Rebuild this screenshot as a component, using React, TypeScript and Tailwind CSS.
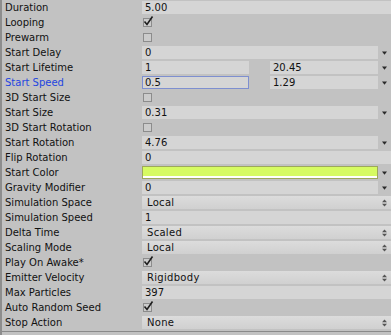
import React from "react";

type Row =
  | { label: string; kind: "field"; value: string; arrow?: boolean; active?: boolean }
  | { label: string; kind: "pair"; a: string; b: string; active?: boolean }
  | { label: string; kind: "check"; checked: boolean }
  | { label: string; kind: "popup"; value: string }
  | { label: string; kind: "color" };

const rows: Row[] = [
  { label: "Duration", kind: "field", value: "5.00" },
  { label: "Looping", kind: "check", checked: true },
  { label: "Prewarm", kind: "check", checked: false },
  { label: "Start Delay", kind: "field", value: "0", arrow: true },
  { label: "Start Lifetime", kind: "pair", a: "1", b: "20.45" },
  { label: "Start Speed", kind: "pair", a: "0.5", b: "1.29", active: true },
  { label: "3D Start Size", kind: "check", checked: false },
  { label: "Start Size", kind: "field", value: "0.31", arrow: true },
  { label: "3D Start Rotation", kind: "check", checked: false },
  { label: "Start Rotation", kind: "field", value: "4.76", arrow: true },
  { label: "Flip Rotation", kind: "field", value: "0" },
  { label: "Start Color", kind: "color" },
  { label: "Gravity Modifier", kind: "field", value: "0", arrow: true },
  { label: "Simulation Space", kind: "popup", value: "Local" },
  { label: "Simulation Speed", kind: "field", value: "1" },
  { label: "Delta Time", kind: "popup", value: "Scaled" },
  { label: "Scaling Mode", kind: "popup", value: "Local" },
  { label: "Play On Awake*", kind: "check", checked: true },
  { label: "Emitter Velocity", kind: "popup", value: "Rigidbody" },
  { label: "Max Particles", kind: "field", value: "397" },
  { label: "Auto Random Seed", kind: "check", checked: true },
  { label: "Stop Action", kind: "popup", value: "None" },
];

const Arrow = () => (
  <div className="w-[13px] flex items-center justify-center">
    <svg width="5" height="4" viewBox="0 0 5 4">
      <path d="M0 0.5h5L2.5 3.8z" fill="#2a2a2a" />
    </svg>
  </div>
);

const PopArrows = () => (
  <svg width="5" height="8" viewBox="0 0 5 8" className="absolute right-[4px] top-[3px]">
    <path d="M0 3.2h5L2.5 0.5z" fill="#555" />
    <path d="M0 4.8h5L2.5 7.5z" fill="#555" />
  </svg>
);

const Field = ({ value, active, className = "" }: { value: string; active?: boolean; className?: string }) => (
  <div
    className={`h-[13px] bg-[#d5d5d5] flex items-center pl-[3px] ${
      active ? "outline outline-1 outline-[#7e8fd0] -outline-offset-1" : ""
    } ${className}`}
  >
    {value}
  </div>
);

const Check = ({ checked }: { checked: boolean }) => (
  <div className="relative w-[9px] h-[9px] ml-[1px] border border-[#8c8c8c] bg-[#cbcbcb]">
    {checked && (
      <svg width="11" height="11" viewBox="0 0 11 11" className="absolute left-[-1px] top-[-4px]">
        <path d="M1.5 6.5 L4 9.5 L9.5 1.5" stroke="#1e1e1e" strokeWidth="1.6" fill="none" />
      </svg>
    )}
  </div>
);

const Value = ({ row }: { row: Row }) => {
  switch (row.kind) {
    case "field":
      return row.arrow ? (
        <div className="flex flex-1">
          <Field value={row.value} className="flex-1" />
          <Arrow />
        </div>
      ) : (
        <Field value={row.value} className="flex-1" />
      );
    case "pair":
      return (
        <div className="flex flex-1">
          <Field value={row.a} active={row.active} className="w-[107px]" />
          <div className="w-[21px]" />
          <Field value={row.b} className="flex-1" />
          <Arrow />
        </div>
      );
    case "check":
      return <Check checked={row.checked} />;
    case "popup":
      return (
        <div className="relative flex-1 h-[13px] bg-gradient-to-b from-[#dcdcdc] to-[#d0d0d0] flex items-center pl-[5px] tracking-[0.3px]">
          {row.value}
          <PopArrows />
        </div>
      );
    case "color":
      return (
        <div className="flex flex-1">
          <div className="flex-1 h-[13px] border border-[#9ca85a] bg-[#d6fb62] flex flex-col justify-end">
            <div className="h-[2px] bg-white" />
          </div>
          <Arrow />
        </div>
      );
  }
};

export default function App() {
  return (
    <div
      className="w-[391px] h-[335px] bg-[#c2c2c2] text-[10px] text-[#111] border-l-2 border-[#8d8d8d] overflow-hidden"
      style={{ fontFamily: '"DejaVu Sans", sans-serif' }}
    >
      <div className="border-b border-[#8a8a8a] pb-[1px]">
        {rows.map((row) => (
          <div key={row.label} className="h-[15px] flex items-center">
            <div
              className={`w-[140px] pl-[3px] ${
                "active" in row && row.active ? "text-[#1f46e0]" : ""
              }`}
            >
              {row.label}
            </div>
            <div className="flex-1 flex items-center">
              <Value row={row} />
            </div>
          </div>
        ))}
      </div>
    </div>
  );
}
